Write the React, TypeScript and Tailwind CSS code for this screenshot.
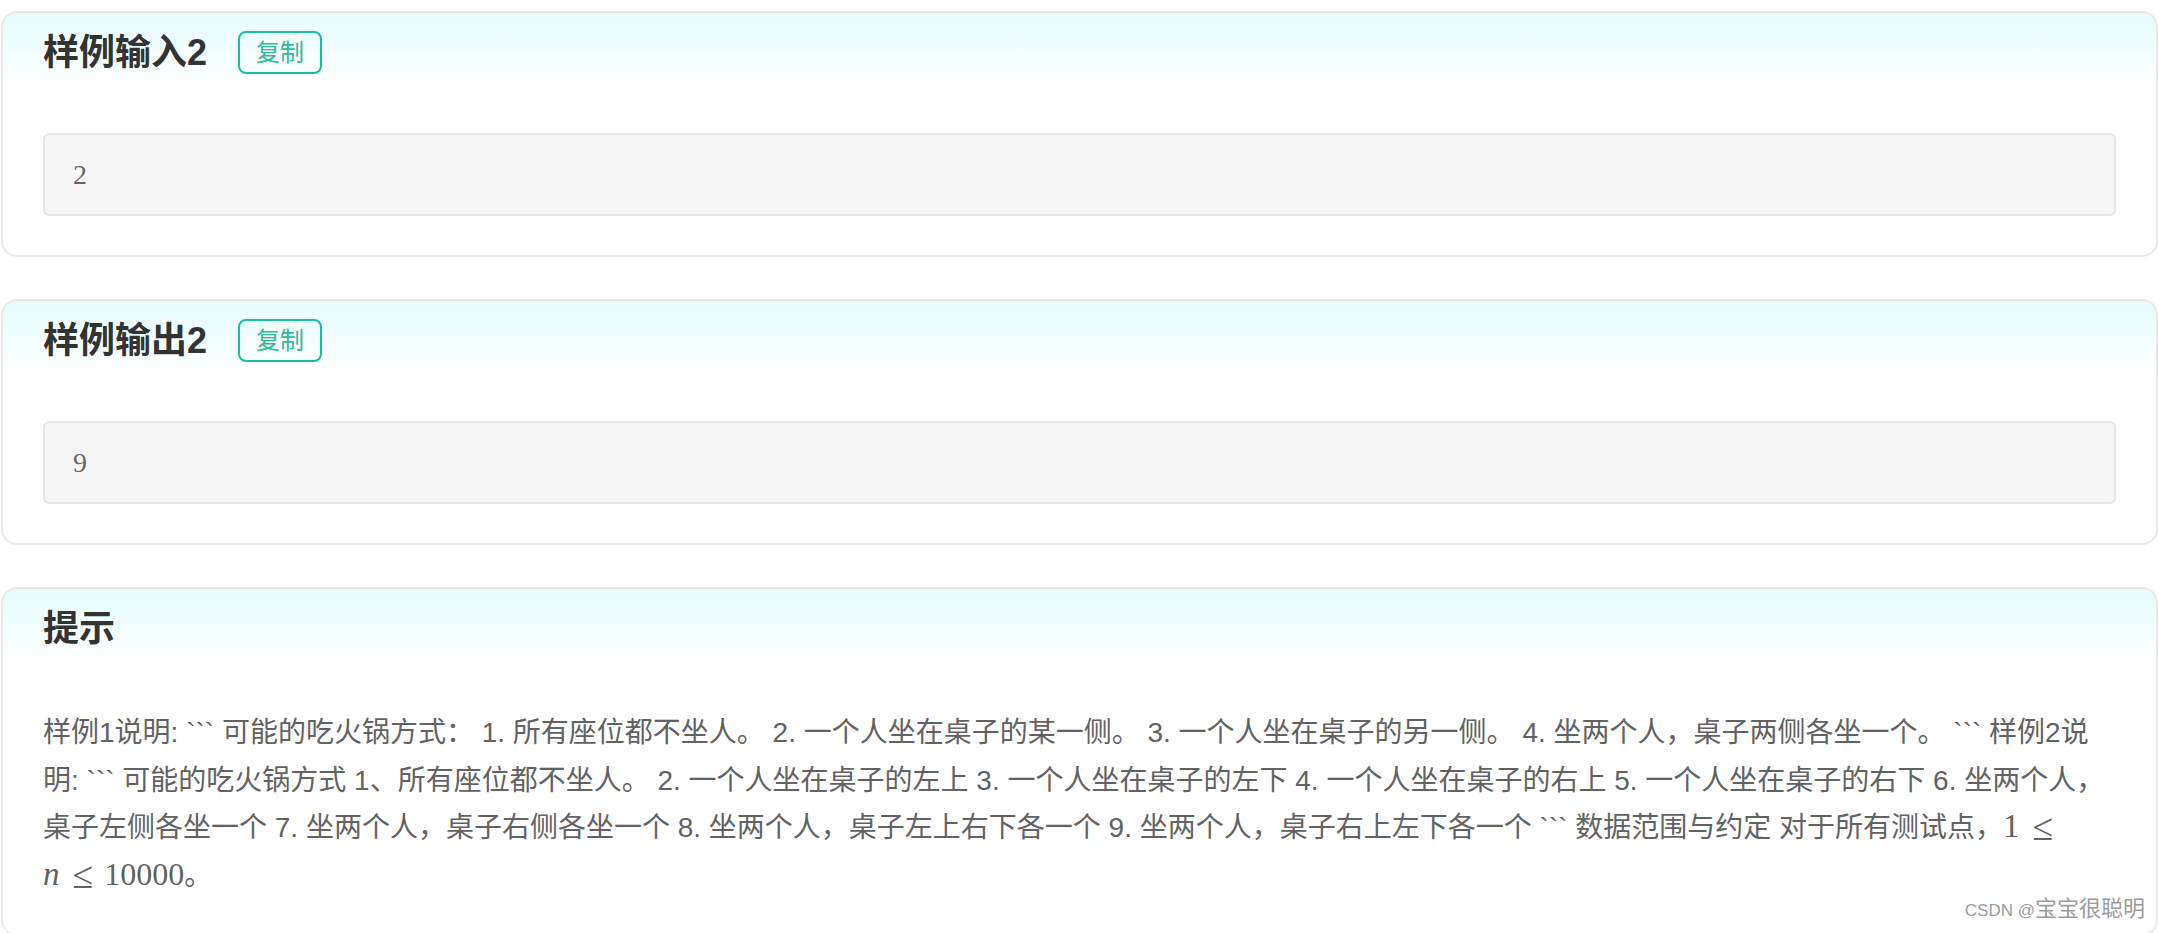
import React from 'react';

const bodyFont = "font-['Liberation_Sans','Noto_Sans_CJK_SC',sans-serif]";
const mathFont = "font-['Liberation_Serif','DejaVu_Serif',serif]";

function CardShell({ children, last }: { children: React.ReactNode; last?: boolean }) {
  return (
    <section
      className={`rounded-[16px] border-2 border-[#e9e9e9] bg-[linear-gradient(180deg,#e4fdfc_0px,#ffffff_72px)] px-[40px] pt-[18px] ${
        last ? 'pb-[35px]' : 'pb-[39px]'
      }`}
    >
      {children}
    </section>
  );
}

function CardHeader({ title, copyable }: { title: string; copyable?: boolean }) {
  return (
    <div className="flex h-[43px] items-center">
      <h2 className="text-[36px] font-bold leading-none text-[#333]">{title}</h2>
      {copyable && (
        <button className="ml-[31px] flex h-[43px] w-[84px] items-center justify-center rounded-[8px] border-2 border-[#19bf9f] text-[24px] leading-none text-[#33b995]">
          复制
        </button>
      )}
    </div>
  );
}

function SampleCard({ title, value }: { title: string; value: string }) {
  return (
    <CardShell>
      <CardHeader title={title} copyable />
      {/* sample data block */}
      <div className="mt-[59px] flex h-[83px] items-center rounded-[6px] border-2 border-[#e6e6e6] bg-[#f6f6f6] pl-[28px]">
        <span className={`${mathFont} text-[28px] leading-none text-[#666]`}>{value}</span>
      </div>
    </CardShell>
  );
}

function Leq({ className = '' }: { className?: string }) {
  return <span className={`relative top-[3px] text-[38px] leading-none ${className}`}>≤</span>;
}

function HintCard() {
  return (
    <CardShell last>
      <CardHeader title="提示" />
      <div className="mt-[59px] text-[28px] leading-[47.5px] text-[#626262]">
        <div className="whitespace-nowrap">
          样例1说明: ``` 可能的吃火锅方式： 1. 所有座位都不坐人。 2. 一个人坐在桌子的某一侧。 3. 一个人坐在桌子的另一侧。 4. 坐两个人，桌子两侧各坐一个。 ``` 样例2说
        </div>
        <div className="whitespace-nowrap">
          明: ``` 可能的吃火锅方式 1、所有座位都不坐人。 2. 一个人坐在桌子的左上 3. 一个人坐在桌子的左下 4. 一个人坐在桌子的右上 5. 一个人坐在桌子的右下 6. 坐两个人，
        </div>
        <div className="whitespace-nowrap">
          桌子左侧各坐一个 7. 坐两个人，桌子右侧各坐一个 8. 坐两个人，桌子左上右下各一个 9. 坐两个人，桌子右上左下各一个 ``` 数据范围与约定 对于所有测试点，
          <span className={`${mathFont} text-[33px] leading-none`}>
            1<Leq className="ml-[13px]" />
          </span>
        </div>
        <div className="whitespace-nowrap">
          <span className={`${mathFont} text-[33px] leading-none`}>
            <i>n</i>
            <Leq className="ml-[13px] mr-[11px]" />
            <span className="text-[32px]">10000</span>
          </span>
          。
        </div>
      </div>
    </CardShell>
  );
}

export default function App() {
  return (
    <div className={`relative h-[933px] overflow-hidden bg-white px-px pt-[11px] ${bodyFont}`}>
      <div className="flex flex-col gap-[42px]">
        <SampleCard title="样例输入2" value="2" />
        <SampleCard title="样例输出2" value="9" />
        <HintCard />
      </div>
      <div className="absolute bottom-[8px] right-[14px] flex items-baseline text-[#9c9c9c]">
        <span className="text-[17px]">CSDN @</span>
        <span className="text-[22px]">宝宝很聪明</span>
      </div>
    </div>
  );
}
